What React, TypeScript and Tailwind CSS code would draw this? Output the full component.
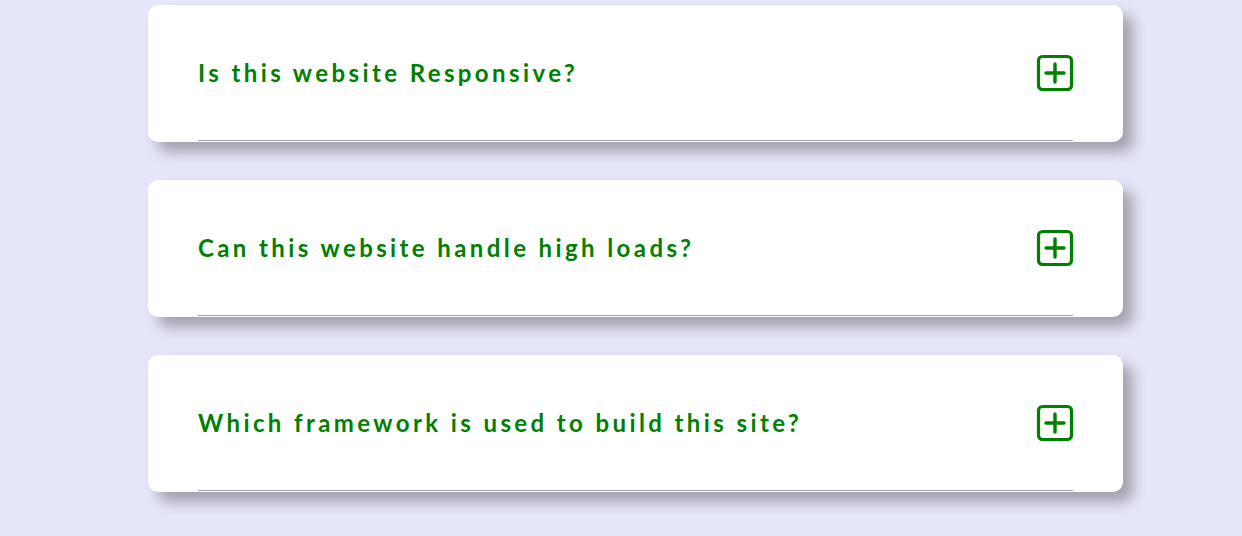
const faqs = [
  "Is this website Responsive?",
  "Can this website handle high loads?",
  "Which framework is used to build this site?",
];

const PlusBox = () => (
  <svg width="38" height="38" viewBox="0 0 38 38" fill="none">
    <rect x="2.5" y="2.5" width="33" height="33" rx="4" stroke="#008000" strokeWidth="3.2" />
    <path d="M10 19h18M19 10v18" stroke="#008000" strokeWidth="3.4" strokeLinecap="round" />
  </svg>
);

export default function App() {
  return (
    <div className="min-h-[536px] bg-[#e6e6fa] pt-[5px] pl-[148px]">
      <div className="flex w-[975px] flex-col gap-[38px]">
        {faqs.map((q) => (
          <div
            key={q}
            className="rounded-[10px] bg-white px-[50px] pb-px shadow-[10px_10px_14px_rgba(0,0,0,0.3)]"
          >
            <div className="flex h-[136px] items-center justify-between border-b border-[#a3a3a3]">
              <h3 className="font-['Lato',sans-serif] text-[24px] font-bold tracking-[3.4px] text-[#008000]">
                {q}
              </h3>
              <div className="-mr-px mt-px">
                <PlusBox />
              </div>
            </div>
          </div>
        ))}
      </div>
    </div>
  );
}
